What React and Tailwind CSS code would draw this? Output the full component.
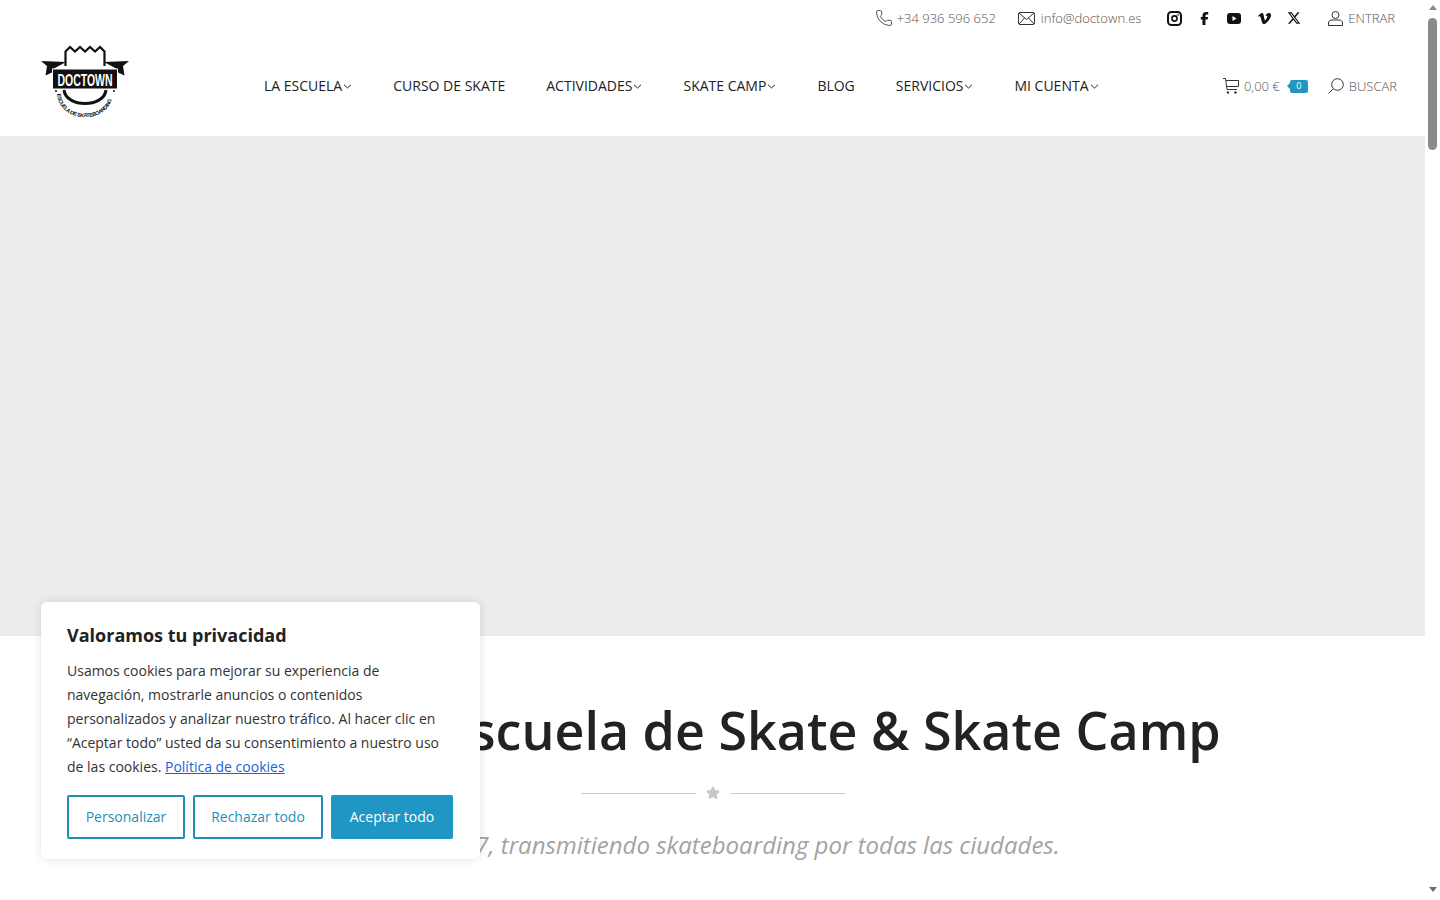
import { Phone, Star } from 'lucide-react';
import { FaFacebookF, FaVimeoV, FaXTwitter } from 'react-icons/fa6';

const navItems = [
  { label: 'LA ESCUELA', arrow: true },
  { label: 'CURSO DE SKATE' },
  { label: 'ACTIVIDADES', arrow: true },
  { label: 'SKATE CAMP', arrow: true },
  { label: 'BLOG' },
  { label: 'SERVICIOS', arrow: true },
  { label: 'MI CUENTA', arrow: true },
];

const Logo = () => (
  <svg width="88" height="76" viewBox="0 0 88 76" className="block">
    {/* crown */}
    <path d="M24.5 22 V7.5 L29 3 L34 7.5 L39 3 L44 7.5 L49 3 L54 7.5 L59 3 L63.5 7.5 V22" fill="none" stroke="#111" strokeWidth="2.2" strokeLinejoin="miter" />
    {/* ribbon tails */}
    <path d="M0 17 L25 18 L12 25 L12 28 L4.5 31.5 L6 22 Z" fill="#111" />
    <path d="M88 17 L63 18 L76 25 L76 28 L83.5 31.5 L82 22 Z" fill="#111" />
    <rect x="11.5" y="25" width="65" height="20" fill="#111" stroke="#fff" strokeWidth="1" />
    <text transform="translate(44 41.5) scale(0.7 1.1)" textAnchor="middle" fontFamily="'Liberation Sans', sans-serif" fontSize="15" fontWeight="700" fill="#fff">DOCTOWN</text>
    {/* bottom arc */}
    <path d="M23 46 C25 64 63 64 65 46" fill="none" stroke="#111" strokeWidth="3" />
    <path id="logoArc" d="M16 50 C19 81 69 81 72 50" fill="none" />
    <text fontFamily="'Liberation Sans', sans-serif" fontSize="5.4" fontWeight="700" letterSpacing="-0.4" fill="#111">
      <textPath href="#logoArc">ESCUELA DE SKATEBOARDING</textPath>
    </text>
    <circle cx="15" cy="47" r="1" fill="#111" />
    <circle cx="73" cy="47" r="1" fill="#111" />
  </svg>
);

const MailIcon = () => (
  <svg width="17" height="13" viewBox="0 0 17 13" fill="none" stroke="#333" strokeWidth="1" className="block">
    <rect x="0.5" y="0.5" width="16" height="12" rx="1.5" />
    <path d="M1 1 L8.5 7.5 L16 1 M1 12 L6.5 6 M16 12 L10.5 6" />
  </svg>
);

const UserIcon = () => (
  <svg width="15" height="15" viewBox="0 0 15 15" fill="none" stroke="#333" strokeWidth="1" className="block">
    <circle cx="7.5" cy="4" r="3.5" />
    <path d="M0.5 14.5 V12 C0.5 10 2 9 4 9 H11 C13 9 14.5 10 14.5 12 V14.5 Z" />
  </svg>
);

const InstagramIcon = () => (
  <svg width="15" height="15" viewBox="0 0 15 15" fill="none" stroke="#111" strokeWidth="2" className="block">
    <rect x="1" y="1" width="13" height="13" rx="3.5" />
    <circle cx="7.5" cy="7.5" r="2.6" strokeWidth="1.6" />
    <circle cx="11" cy="4" r="0.6" fill="#111" strokeWidth="0.4" />
  </svg>
);

const YoutubeIcon = () => (
  <svg width="14" height="11" viewBox="0 0 14 11" className="block">
    <rect width="14" height="11" rx="3" fill="#111" />
    <path d="M5.5 3 L9.5 5.5 L5.5 8 Z" fill="#fff" />
  </svg>
);

const CartIcon = () => (
  <svg width="16" height="16" viewBox="0 0 16 16" fill="none" stroke="#333" strokeWidth="1" className="block">
    <path d="M0 0.5 H2.5 L4 11.5 H14" />
    <path d="M2.8 2.5 H15.5 V8.5 H3.6" />
    <circle cx="5" cy="14.5" r="1.2" fill="#333" stroke="none" />
    <circle cx="12.5" cy="14.5" r="1.2" fill="#333" stroke="none" />
  </svg>
);

const SearchIcon = () => (
  <svg width="16" height="16" viewBox="0 0 16 16" fill="none" stroke="#333" strokeWidth="1" className="block">
    <circle cx="9.5" cy="6.5" r="5.8" />
    <path d="M5.3 10.7 L0.5 15.5" />
  </svg>
);

const NavArrow = () => (
  <svg width="9" height="5" viewBox="0 0 9 5" fill="none" stroke="#222" strokeWidth="1" className="mt-[1px] ml-[1px] block">
    <path d="M1 0.8 L4.5 4 L8 0.8" />
  </svg>
);

const App = () => {
  return (
    <div className="relative h-[900px] w-[1440px] overflow-hidden bg-white font-['Open_Sans',sans-serif] text-[#222]">
      <div className="w-[1425px]">
        {/* top bar */}
        <div className="flex h-9 items-center justify-end pr-[30px] text-[13px] font-light text-[#555]">
          <Phone size={18} strokeWidth={1.1} className="text-[#333]" />
          <span className="mt-[1px] ml-[4px]">+34 936 596 652</span>
          <span className="ml-[22px]"><MailIcon /></span>
          <span className="mt-[1px] ml-[6px]">info@doctown.es</span>
          <div className="ml-[25px] flex items-center gap-[14px] text-[#111]">
            <span className="flex w-4 justify-center"><InstagramIcon /></span>
            <span className="flex w-4 justify-center"><FaFacebookF size={13} /></span>
            <span className="flex w-4 justify-center"><YoutubeIcon /></span>
            <span className="flex w-4 justify-center"><FaVimeoV size={15} /></span>
            <span className="flex w-4 justify-center"><FaXTwitter size={14} /></span>
          </div>
          <span className="ml-[26px]"><UserIcon /></span>
          <span className="mt-[1px] ml-[5px]">ENTRAR</span>
        </div>

        {/* header */}
        <header className="flex h-[100px] items-center pr-[28px] pl-[41px]">
          <div className="-mt-2"><Logo /></div>
          <nav className="-mt-[1px] ml-[135px] flex gap-[41px] text-sm text-[#222]">
            {navItems.map((item) => (
              <a key={item.label} className="flex items-center">
                {item.label}
                {item.arrow && <NavArrow />}
              </a>
            ))}
          </nav>
          <div className="ml-auto flex items-center text-[13px] font-light text-[#555]">
            <CartIcon />
            <span className="mt-[1px] ml-[5px]">0,00 €</span>
            <span className="relative ml-[10px] flex h-[13px] w-[18px] items-center justify-center rounded-[2px] bg-[#1f96c3] text-[9px] font-normal text-white">
              0
              <span className="absolute top-1/2 -left-[3px] h-0 w-0 -translate-y-1/2 border-y-[3px] border-r-[3px] border-y-transparent border-r-[#1f96c3]"></span>
            </span>
            <span className="ml-[20px]"><SearchIcon /></span>
            <span className="mt-[1px] ml-[5px]">BUSCAR</span>
          </div>
        </header>

        {/* hero placeholder */}
        <div className="h-[500px] bg-[#ececec]"></div>

        {/* intro */}
        <section className="text-center">
          <h1 className="mt-[61px] text-[52px] leading-[66px] font-semibold whitespace-nowrap text-[#222]">
            Doctown Escuela de Skate &amp; Skate Camp
          </h1>
          <div className="mt-[23px] flex items-center justify-center">
            <div className="h-px w-[115px] bg-[#ccc]"></div>
            <Star size={14} fill="#c8c8c8" stroke="#c8c8c8" className="mx-[10px]" />
            <div className="h-px w-[115px] bg-[#ccc]"></div>
          </div>
          <p className="mt-[29px] text-2xl leading-8 font-normal whitespace-nowrap text-[#a3a3a3] italic">
            Desde 2007, transmitiendo skateboarding por todas las ciudades.
          </p>
        </section>
      </div>

      {/* scrollbar */}
      <div className="absolute top-0 right-0 bottom-0 flex w-[15px] flex-col items-center bg-white">
        <div className="mt-[5px] h-0 w-0 border-x-[4px] border-b-[5px] border-x-transparent border-b-[#8a8a8a]"></div>
        <div className="mt-[8px] h-[132px] w-[9px] rounded-[5px] bg-[#8a8a8a]"></div>
        <div className="mt-auto mb-[8px] h-0 w-0 border-x-[4px] border-t-[5px] border-x-transparent border-t-[#6e6e6e]"></div>
      </div>

      {/* cookie box */}
      <div className="absolute top-[602px] left-[41px] h-[257px] w-[439px] rounded-md bg-white px-[26px] pt-[21px] shadow-[0_0_10px_rgba(0,0,0,0.12)]">
        <h2 className="text-lg leading-[24px] font-bold text-[#222]">Valoramos tu privacidad</h2>
        <p className="mt-3 text-sm leading-6 text-[#333]">
          Usamos cookies para mejorar su experiencia de navegación, mostrarle anuncios o contenidos personalizados y analizar nuestro tráfico. Al hacer clic en “Aceptar todo” usted da su consentimiento a nuestro uso de las cookies.{' '}
          <a className="text-[#1863dc] underline">Política de cookies</a>
        </p>
        <div className="mt-4 flex gap-2 text-sm">
          <button className="h-11 w-[118px] rounded-[2px] border-2 border-[#1f8fb8] text-[#1f8fb8]">Personalizar</button>
          <button className="h-11 w-[130px] rounded-[2px] border-2 border-[#1f8fb8] text-[#1f8fb8]">Rechazar todo</button>
          <button className="h-11 w-[122px] rounded-[2px] bg-[#1f96c3] text-white">Aceptar todo</button>
        </div>
      </div>
    </div>
  );
};

export default App;
